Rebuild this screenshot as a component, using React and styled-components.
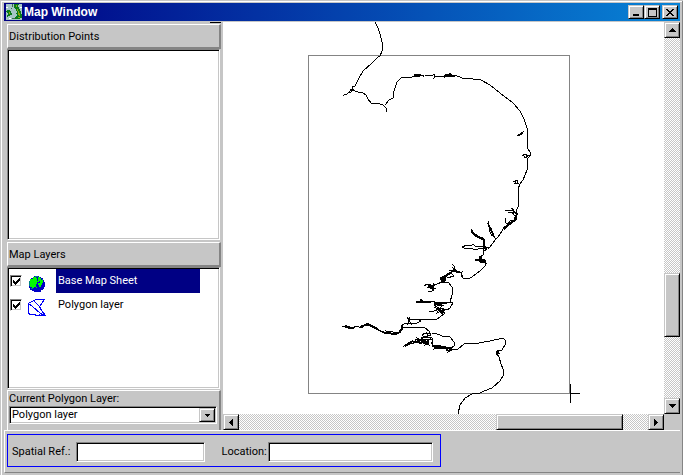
import React, { useState } from "react";
import styled, { createGlobalStyle, css } from "styled-components";

const face = "#c6c6c6";
const shade = "#848484";
const navy = "#000084";

const GlobalStyle = createGlobalStyle`
  * { box-sizing: border-box; }
  body { margin: 0; background: ${face}; }
  body, button, input, select {
    font-family: Roboto, "Liberation Sans", Arial, sans-serif;
    font-size: 11px;
    line-height: 14px;
    color: #000;
  }
`;

const raised = css`
  background: ${face};
  border: 1px solid;
  border-color: ${face} #000 #000 ${face};
  box-shadow: inset 1px 1px #fff, inset -1px -1px ${shade};
`;

const sunken = css`
  background: #fff;
  border: 1px solid;
  border-color: ${shade} #fff #fff ${shade};
  box-shadow: inset 1px 1px #000, inset -1px -1px ${face};
`;

const Window = styled.main`
  display: flex;
  flex-direction: column;
  height: 100vh;
  min-height: 400px;
  padding: 3px 3px 2px 4px;
  background: ${face};
  box-shadow: inset 0 1px ${face}, inset -1px 0 ${shade}, inset 1px 0 ${face}, inset 2px 2px #fff;
`;

const TitleBar = styled.header`
  display: flex;
  align-items: center;
  flex: none;
  height: 18px;
  padding: 0 2px;
  background: linear-gradient(to right, ${navy}, #0884d6);
`;

const Title = styled.h1`
  flex: 1;
  margin: 0 0 0 2px;
  font: bold 12px/18px "Liberation Sans", Arial, sans-serif;
  color: #fff;
`;

const Icon = styled.svg`
  display: block;
  flex: none;
  pointer-events: none;
`;

const SmallButton = styled.button`
  ${raised}
  display: flex;
  align-items: center;
  justify-content: center;
  flex: none;
  width: 16px;
  height: ${(p) => p.$height || 16}px;
  padding: 0;
  margin-left: ${(p) => p.$gap || 0}px;
`;

const Body = styled.div`
  display: grid;
  grid-template-columns: 219px 1fr;
  flex: 1;
  min-height: 0;
  padding-top: 1px;
`;

const Sidebar = styled.aside`
  display: flex;
  flex-direction: column;
  min-height: 0;
  padding: 2px 0 0 3px;
  border-right: 2px solid ${face};
  background: linear-gradient(#000, #000) top right / 11px 1px no-repeat;
`;

const PanelHeading = styled.h2`
  flex: none;
  height: 25px;
  margin: 0;
  padding: 4px 0 0 1px;
  font-size: 11px;
  font-weight: normal;
  line-height: 16px;
  border: solid;
  border-width: 1px 2px 2px 1px;
  border-color: #fff ${shade} ${shade} #fff;
`;

const List = styled.ul`
  ${sunken}
  flex: ${(p) => p.$grow} 1 0;
  min-height: 0;
  margin: 0 1px ${(p) => p.$after}px 0;
  padding: 1px;
  list-style: none;
  overflow: hidden;
`;

const LayerRow = styled.li`
  display: flex;
  align-items: center;
  height: 24px;
  padding-left: 1px;
`;

const CheckCell = styled.span`
  display: grid;
  flex: none;
  width: 12px;
  > * { grid-area: 1 / 1; place-self: center; }
`;

const Check = styled.input`
  ${sunken}
  appearance: none;
  width: 12px;
  height: 12px;
  margin: 0;
`;

const LayerLabel = styled.label`
  display: flex;
  align-items: center;
  flex: 1;
  height: 24px;
  gap: 10px;
  padding-left: 6px;
  > svg { margin-top: 6px; }
`;

const LayerName = styled.span`
  flex: 1;
  height: 24px;
  margin-right: 18px;
  padding-left: 2px;
  line-height: 24px;
  background: ${(p) => (p.$selected ? navy : "transparent")};
  color: ${(p) => (p.$selected ? "#fff" : "#000")};
`;

const CurrentLayer = styled.div`
  display: flex;
  flex-direction: column;
  flex: none;
  height: 40px;
  padding: 1px 2px 0 1px;
  border: solid;
  border-width: 1px 2px 0 1px;
  border-color: #fff ${shade} #fff #fff;
`;

const SelectBox = styled.div`
  ${sunken}
  display: grid;
  height: 18px;
  padding: 1px;
  > * { grid-area: 1 / 1; }
`;

const Select = styled.select`
  appearance: none;
  width: 100%;
  height: 14px;
  padding: 0 18px 0 1px;
  border: 0;
  background: #fff;
  outline: 0;
`;

const SelectArrow = styled.span`
  ${raised}
  display: flex;
  align-items: center;
  justify-content: center;
  justify-self: end;
  width: 16px;
  height: 14px;
  pointer-events: none;
`;

const MapPane = styled.section`
  display: grid;
  grid-template: minmax(0, 1fr) 16px / minmax(0, 1fr) 16px;
  min-height: 0;
`;

const MapView = styled.div`
  overflow: hidden;
  background: #fff;
`;

const Scrollbar = styled.div`
  display: flex;
  flex-direction: ${(p) => (p.$vertical ? "column" : "row")};
  background: repeating-conic-gradient(${face} 0 25%, #fff 0 50%) 0 0 / 2px 2px;
`;

const Track = styled.div`
  flex: ${(p) => p.$grow} 1 0;
`;

const Thumb = styled.div`
  ${raised}
  flex: ${(p) => p.$grow} 1 0;
`;

const Footer = styled.footer`
  flex: none;
  padding: 3px 2px 5px;
  border: solid;
  border-width: 1px 0 1px 1px;
  border-color: #fff ${shade} ${shade} #fff;
`;

const FieldGroup = styled.form`
  display: flex;
  align-items: center;
  width: 434px;
  max-width: 100%;
  height: 33px;
  padding: 3px 4px 0 4px;
  border: 1px solid #0000ff;
`;

const FieldLabel = styled.label`
  flex: none;
  width: ${(p) => p.$width}px;
  white-space: nowrap;
`;

const Field = styled.input`
  ${sunken}
  flex: ${(p) => p.$grow} 1 0;
  min-width: 0;
  height: 20px;
  margin-right: ${(p) => p.$after}px;
  padding: 0 1px;
  outline: 0;
`;

const Arrow = ({ dir }) => {
  const shapes = {
    up: "M3 0h1v1h1v1h1v1h1v1H0V3h1V2h1V1h1z",
    down: "M0 0h7v1H6v1H5v1H4v1H3V3H2V2H1V1H0z",
    left: "M4 0v7H3V6H2V5H1V4H0V3h1V2h1V1h1V0z",
    right: "M0 0h1v1h1v1h1v1h1v1H3v1H2v1H1v1H0z",
    small: "M0 0h5v1H4v1H3v1H2V2H1V1H0z",
  };
  const size = { up: [7, 4], down: [7, 4], left: [4, 7], right: [4, 7], small: [5, 3] }[dir];
  return (
    <Icon width={size[0]} height={size[1]} shapeRendering="crispEdges">
      <path d={shapes[dir]} />
    </Icon>
  );
};

const AppIcon = () => (
  <Icon width="16" height="16" viewBox="0 0 16 16" shapeRendering="crispEdges">
    <path fill="#a5c6c6" d="M0 0h16v16H0z" />
    <path fill="#087b18" d="M8 0h5v1h-1v2h1v2h1v2h1v3h1v4h-2v1H9v-2h1v-1h1v-2h-1V9h1V7h-1V5H9V4H8zM1 6h3v1h1v2h1v2H4v1H2v1H1v-2h1V9H1V8H0V7h1z" />
    <path fill="#8ca510" d="M10 1h1v2h-1zM11 5h1v2h1v2h1v3h-1v-1h-1V7h-1zM3 8h1v2H3zM12 13h2v1h-2z" />
    <path fill="#396b4a" d="M6 0h1v3H6zM5 4h1v1H5zM6 14h3v1H6z" />
    <path fill="#fff" d="M0 3h2v1H0zM3 14h2v1H3zM14 3h2v1h-2z" />
  </Icon>
);

const Globe = () => (
  <Icon width="18" height="18" viewBox="0 0 18 18" shapeRendering="crispEdges">
    <path fill="#0000c6" d="M6 1h5v1h2v1h2v2h1v2h1v5h-1v2h-1v1h-2v2H6v-1H4v-1H2v-2H1V6h1V4h1V3h3z" />
    <path fill="#00f700" d="M5 2h3v1h1v3h2v1H9v2H8v3H6v1H4v-1H2v-2H1V6h1V4h3zM10 2h2v1h1v2h2v3h-1v2h-1v2h-2v-2h-1V8h2V6h-2zM8 12h1v1H8z" />
    <path fill="#008484" d="M1 6h1v5H1zM7 1h3v1H7zM14 4h1v1h-1zM3 13h2v1H3z" />
  </Icon>
);

const Polygons = () => (
  <Icon width="18" height="18" viewBox="0 0 18 18" shapeRendering="crispEdges" fill="none" stroke="#0000f7">
    <path d="M.5 4.5L5.5 1.5L8.5 .5H16.5L11.5 7.5L13.5 11.5L17.5 16.5H12.5L2.5 15.5L.5 14.5zM.5 4.5L4.5 7.5L12.5 14.5L16.5 16.5M5.5 1.5L11.5 7.5M12.5 14.5L10.5 16.5" />
  </Icon>
);

const CheckMark = () => (
  <Icon width="7" height="7" shapeRendering="crispEdges">
    <path d="M0 2h1v1h1v1h1V3h1V2h1V1h1V0h1v3H6v1H5v1H4v1H3v1H2V6H1V5H0z" />
  </Icon>
);

const Coastline = () => (
  <Icon
    width="441"
    height="392"
    viewBox="223 22 441 392"
    shapeRendering="crispEdges"
    fill="none"
    stroke="#000"
    role="img"
    aria-label="Coastline map"
  >
    <path stroke={shade} d="M308.5 55.5h261v338h-261z" />
    <path d="M570.5 384v19M570 393.5h10" />
    {/* northern coast and headlands */}
    <path d="M375 22L378 28L380 34L382 42L382 51L380 56L378 57L372 63L363 71L358 80L355 86L352 87L353 90L350 91L347 94L345 94L343 96M352 90L358 92L362 92L366 95L368 99L371 103L380 104L383 105L386 108L387 112M385 105L389 100L393 98L394 91L397 82L402 77L412 77L414 76L415 74L421 75L419 77L415 75L414 77M419 75L424 75L423 77M425 75L432 76L434 74L435 77L433 79M434 76L444 77L446 74L449 75L455 76L445 77L450 73L453 77M445 76L455 75L462 78L473 79L481 80L490 85L500 93L513 103L520 111L524 119L527 128L527 139L528 149L530 152L530 156L528 158L527 170L523 180L520 184L518 189L518 207" />
    <path d="M517 136L523 132L522 134L518 135M522 156L525 154L528 156L525 158L524 156M527 155L530 156M513 182L517 180L518 183L515 183L516 181M350 89L354 90L349 93" />
    {/* eastern creeks */}
    <path d="M518 207L516 211L516 220L512 223L508 226L504 227L502 231L498 237L495 240L493 243L489 248L486 247M516 213L512 210L505 210M511 208L514 210M515 216L512 212L508 213M515 220L510 221L506 226M514 221L508 223L504 230M505 218L506 223L509 224M489 221L488 224L490 230L492 232L493 236L496 239M487 223L489 225L489 230L492 236M472 229L471 232L475 236L479 238L484 240L484 248M472 230L473 233L477 236L483 238L485 249M462 247L467 245L471 246L473 244L476 247L484 246L487 248L478 249L473 249L470 248L466 249L462 247M482 248L485 251L488 247L489 249M484 249L483 255L480 257L481 260L486 261L485 266L480 271L472 277L468 279L463 278L461 273L458 271L452 272L442 280" />
    <path fill="#000" d="M475 260L479 259L480 256L482 259L485 260L486 263L480 262L479 261zM416 302L420 301L421 299L423 301L431 302L430 303L421 302zM440 278L445 277L445 281L442 282zM438 310L445 310L442 314L440 312z" />
    <path d="M452 264L455 267L453 270L461 273M452 267L459 273L462 272L461 277M455 266L453 272L449 270L456 271M444 277L450 272L454 276L447 278M440 277L445 280L441 282L446 276M424 286L427 284L434 286L432 291L428 291M427 288L432 286L442 282L448 282L452 287L452 295L450 302L447 303L440 303M430 288L436 289M433 283L433 291M416 302L433 301L438 304L434 305L440 309L442 305L436 303M436 302L453 303L450 308L447 310L441 308M429 311L434 311L439 309L437 313L444 309M434 307L445 313L436 320L430 319L410 319L408 324L417 323L421 321L417 319L411 320M407 317L412 325M410 317L408 321M438 302L437 306L444 305" />
    {/* southern estuary */}
    <path d="M342 326L348 326L351 328L354 327L358 326L360 328L364 325L368 324L372 326L376 328L380 331L384 333L398 334L401 331L401 326L404 324L411 323M345 325L352 329L355 327M361 328L366 325L370 326L376 329L386 333M384 332L388 333L386 331L400 333L403 328L406 327L425 328L429 331L431 335L424 337L422 335L425 333L430 334M426 332L428 336M399 332L403 326M403 347L407 344L410 344L413 341L418 341L417 338L422 341L420 343L427 341L425 345L429 343L427 340L420 339L432 340M405 346L411 341L415 343L416 339L424 341L421 337L432 337M422 342L429 345L427 342L431 338M409 344L420 342L427 344M432 333L435 333L442 336L450 337L454 342L454 346L451 348L441 346L432 345L432 338M431 342L436 349L450 348L448 352L452 350L446 347L452 349M435 348L441 346L445 349L450 348M433 350L437 347L442 349M452 349L458 349L464 344L479 343L490 341L503 338L505 340L505 345L502 350L497 350L499 353L496 353L499 357L501 364L503 369L503 376L500 381L492 388L484 391L480 393L472 394L465 398L460 405L458 414" />
    <path strokeWidth="2" d="M345 327L351 328M360 327L368 324L372 326L378 329M405 346L413 341M417 341L422 340L421 344M424 339L426 344M446 350L450 351M432 346L448 348M479 260L485 260M504 229L509 224L514 221L517 214L513 211M490 227L494 237M472 232L478 237L484 240L484 248M496 352L499 352M446 75L451 75M415 76L420 75M438 308L441 311M434 303L440 304M442 278L450 273M453 271L460 272M428 286L434 288M385 333L397 334M519 135L521 134" />
  </Icon>
);

const layers = [
  { id: "base", name: "Base Map Sheet", icon: <Globe /> },
  { id: "polygon", name: "Polygon layer", icon: <Polygons /> },
];

export default function App() {
  const [selected, setSelected] = useState("base");
  const [visible, setVisible] = useState({ base: true, polygon: true });

  return (
    <Window>
      <GlobalStyle />
      <TitleBar>
        <AppIcon />
        <Title>Map Window</Title>
        <SmallButton $height={14} aria-label="Minimize">
          <Icon width="9" height="8"><path d="M1 6h6v2H1z" /></Icon>
        </SmallButton>
        <SmallButton $height={14} aria-label="Maximize">
          <Icon width="9" height="9"><path fillRule="evenodd" d="M0 0h9v9H0zM1 2v6h7V2z" /></Icon>
        </SmallButton>
        <SmallButton $height={14} $gap={2} aria-label="Close">
          <Icon width="8" height="7" shapeRendering="crispEdges">
            <path d="M0 0h2v1h1v1h2V1h1V0h2v1H7v1H6v1H5v1h1v1h1v1h1v1H6V6H5V5H3v1H2v1H0V6h1V5h1V4h1V3H2V2H1V1H0z" />
          </Icon>
        </SmallButton>
      </TitleBar>

      <Body>
        <Sidebar>
          <PanelHeading>Distribution Points</PanelHeading>
          <List $grow={192} $after={2} aria-label="Distribution Points" />
          <PanelHeading>Map Layers</PanelHeading>
          <List $grow={121} $after={1} aria-label="Map Layers">
            {layers.map((layer) => (
              <LayerRow key={layer.id} onClick={() => setSelected(layer.id)}>
                <CheckCell>
                  <Check
                    id={layer.id}
                    type="checkbox"
                    checked={visible[layer.id]}
                    onChange={(e) => setVisible({ ...visible, [layer.id]: e.target.checked })}
                  />
                  {visible[layer.id] && <CheckMark />}
                </CheckCell>
                <LayerLabel htmlFor={layer.id}>
                  {layer.icon}
                  <LayerName $selected={selected === layer.id}>{layer.name}</LayerName>
                </LayerLabel>
              </LayerRow>
            ))}
          </List>
          <CurrentLayer>
            <label htmlFor="current">Current Polygon Layer:</label>
            <SelectBox>
              <Select id="current">
                <option>Polygon layer</option>
              </Select>
              <SelectArrow><Arrow dir="small" /></SelectArrow>
            </SelectBox>
          </CurrentLayer>
        </Sidebar>

        <MapPane>
          <MapView><Coastline /></MapView>
          <Scrollbar $vertical>
            <SmallButton aria-label="Scroll up"><Arrow dir="up" /></SmallButton>
            <Track $grow={236} />
            <Thumb $grow={63} />
            <Track $grow={61} />
            <SmallButton aria-label="Scroll down"><Arrow dir="down" /></SmallButton>
          </Scrollbar>
          <Scrollbar>
            <SmallButton aria-label="Scroll left"><Arrow dir="left" /></SmallButton>
            <Track $grow={258} />
            <Thumb $grow={126} />
            <Track $grow={25} />
            <SmallButton aria-label="Scroll right"><Arrow dir="right" /></SmallButton>
          </Scrollbar>
        </MapPane>
      </Body>

      <Footer>
        <FieldGroup>
          <FieldLabel htmlFor="spatial" $width={64}>Spatial Ref.:</FieldLabel>
          <Field id="spatial" $grow={129} $after={16} autoFocus />
          <FieldLabel htmlFor="location" $width={47}>Location:</FieldLabel>
          <Field id="location" $grow={165} $after={3} />
        </FieldGroup>
      </Footer>
    </Window>
  );
}
